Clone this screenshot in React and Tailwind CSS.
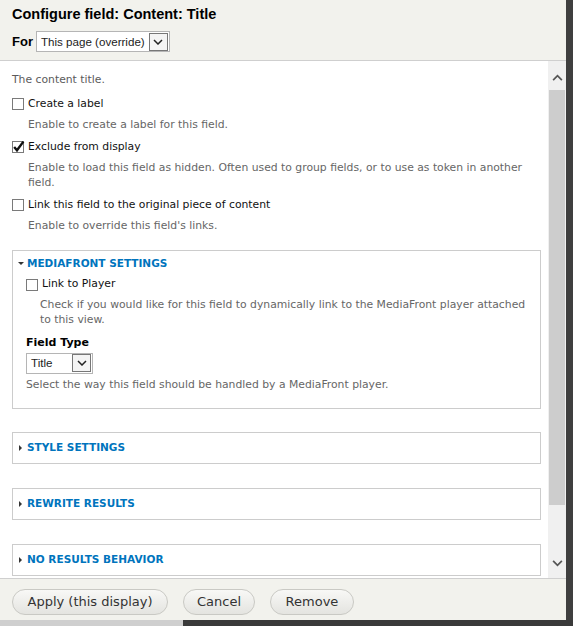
import { useState } from "react";

const body = { fontFamily: '"DejaVu Sans", Verdana, sans-serif' };
const arial = { fontFamily: '"Liberation Sans", Arial, sans-serif' };

function Box({ checked }) {
      return (
            <span className="relative inline-block w-[12px] h-[12px] border border-[#7a7a7a] bg-white shrink-0">
                  {checked && (
                        <svg viewBox="0 0 12 12" className="absolute -left-[1px] -top-[2px] w-[13px] h-[13px]">
                              <path d="M2 6.5 L4.6 9.5 L10.5 1.5" fill="none" stroke="#111" strokeWidth="2.2" />
                        </svg>
                  )}
            </span>
      );
}

function CheckRow({ label, checked, desc, indent = "pl-[16px]" }) {
      return (
            <div className="mb-[8.5px]">
                  <label className="flex items-center gap-[4px] text-[10.8px] text-[#111] h-[14px]">
                        <Box checked={checked} />
                        {label}
                  </label>
                  <p className={`${indent} mt-[5.5px] text-[10.8px] leading-[15px] text-[#666]`}>{desc}</p>
            </div>
      );
}

function Dropdown({ value, width }) {
      return (
            <div className={`flex items-center bg-white border border-[#b5b5b5] h-[21px] ${width}`} style={arial}>
                  <span className="flex-1 pl-[4px] text-[11.6px] text-[#222] whitespace-nowrap overflow-hidden">{value}</span>
                  <span className="w-[19px] h-[18px] mr-[1px] border border-[#777] bg-[#f4f4f4] flex items-center justify-center">
                        <svg viewBox="0 0 10 6" className="w-[10px] h-[6px]">
                              <path d="M1 1 L5 5 L9 1" fill="none" stroke="#222" strokeWidth="1.5" />
                        </svg>
                  </span>
            </div>
      );
}

function Collapsed({ title }) {
      return (
            <div className="border border-[#cccccc] h-[32px] flex items-center pl-[6px] gap-[5px]">
                  <span className="w-0 h-0 border-y-[3px] border-y-transparent border-l-[3px] border-l-[#333]" />
                  <span className="text-[10.5px] font-bold text-[#0074bd]">{title}</span>
            </div>
      );
}

function Chevron({ up }) {
      return (
            <svg viewBox="0 0 12 8" className="w-[11px] h-[7px]">
                  <path d={up ? "M1 7 L6 2 L11 7" : "M1 1 L6 6 L11 1"} fill="none" stroke="#555" strokeWidth="2" />
            </svg>
      );
}

const buttons = [
      { label: "Apply (this display)", w: "w-[156px]" },
      { label: "Cancel", w: "w-[72px]" },
      { label: "Remove", w: "w-[84px]" },
];

export default function App() {
      const [exclude] = useState(true);

      return (
            <div className="w-[573px] h-[626px] flex flex-col overflow-hidden bg-[#3c3c3c]" style={body}>
                  <div className="flex h-[620px]">
                        <div className="w-[566px] flex flex-col bg-[#f2f2ed]">
                              <header className="h-[61px] border-b border-[#cfcfcf] px-[12px] pt-[5px]">
                                    <h1 className="text-[14.5px] font-bold text-black leading-[18px]" style={arial}>Configure field: Content: Title</h1>
                                    <div className="flex items-center gap-[3px] mt-[8px]">
                                          <span className="text-[13px] font-bold text-black" style={arial}>For</span>
                                          <Dropdown value="This page (override)" width="w-[134px]" />
                                    </div>
                              </header>

                              <div className="flex h-[517px] bg-white">
                                    <div className="flex-1 pl-[12px] pr-[7px] pt-[11px] overflow-hidden">
                                          <p className="text-[10.8px] leading-[15px] text-[#5b5b5b] mb-[10px]">The content title.</p>
                                          <CheckRow label="Create a label" desc="Enable to create a label for this field." />
                                          <CheckRow label="Exclude from display" checked={exclude} desc="Enable to load this field as hidden. Often used to group fields, or to use as token in another field." />
                                          <CheckRow label="Link this field to the original piece of content" desc="Enable to override this field's links." />

                                          <fieldset className="border border-[#cccccc] mt-[17px] h-[159px] pl-[13px] pr-[6px] pt-[6px]">
                                                <div className="flex items-center gap-[3px] -ml-[8px] mb-[7px] h-[14px]">
                                                      <span className="w-0 h-0 border-x-[3px] border-x-transparent border-t-[3px] border-t-[#333]" />
                                                      <span className="text-[10.5px] font-bold text-[#0074bd]">MEDIAFRONT SETTINGS</span>
                                                </div>
                                                <CheckRow label="Link to Player" indent="pl-[14px]" desc="Check if you would like for this field to dynamically link to the MediaFront player attached to this view." />
                                                <div className="text-[11px] font-bold text-black leading-[14px]">Field Type</div>
                                                <div className="mt-[3px]"><Dropdown value="Title" width="w-[67px]" /></div>
                                                <p className="text-[10.8px] leading-[15px] text-[#666] mt-[3px]">Select the way this field should be handled by a MediaFront player.</p>
                                          </fieldset>

                                          <div className="flex flex-col gap-[24px] mt-[23px]">
                                                <Collapsed title="STYLE SETTINGS" />
                                                <Collapsed title="REWRITE RESULTS" />
                                                <Collapsed title="NO RESULTS BEHAVIOR" />
                                          </div>
                                    </div>

                                    {/* scrollbar */}
                                    <div className="w-[18px] bg-[#f0f0f0] flex flex-col items-center">
                                          <div className="h-[29px] flex items-center justify-center pt-[4px]"><Chevron up /></div>
                                          <div className="w-[16px] h-[415px] bg-[#cdcdcd]" />
                                          <div className="flex-1" />
                                          <div className="h-[30px] flex items-center justify-center"><Chevron /></div>
                                    </div>
                              </div>

                              <footer className="flex-1 border-t border-[#cfcfcf] flex items-start gap-[15px] px-[12px] pt-[10px]">
                                    {buttons.map((b) => (
                                          <button key={b.label} className={`${b.w} h-[26px] rounded-full border border-[#c9c9c4] bg-gradient-to-b from-[#f8f8f6] to-[#e4e4e0] text-[13px] text-[#333]`}>
                                                {b.label}
                                          </button>
                                    ))}
                              </footer>
                        </div>
                        <div className="flex-1 bg-[#3f3f3f]" />
                  </div>
                  <div className="flex h-[6px]">
                        <div className="w-[183px] bg-[#cfcfcf]" />
                        <div className="flex-1 bg-[#3a3a3a]" />
                  </div>
            </div>
      );
}
